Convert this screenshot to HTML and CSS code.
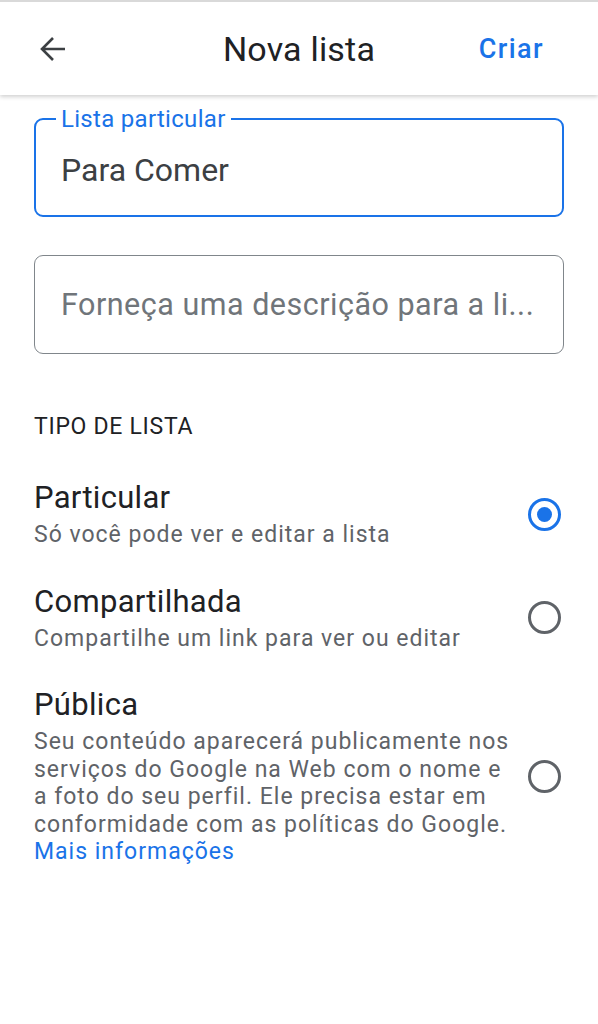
FILE: index.html
```html
<!DOCTYPE html>
<html lang="pt">
<head>
<meta charset="utf-8">
<title>Nova lista</title>
<link rel="stylesheet" href="styles.css">
</head>
<body>
<header class="appbar">
  <div class="appbar-left">
    <svg class="back" viewBox="0 0 28 28" width="28" height="28"><path d="M26 14H3M14 3L3 14l11 11" fill="none" stroke="#3c4043" stroke-width="2.6" stroke-linecap="butt" stroke-linejoin="miter"/></svg>
  </div>
  <h1 class="title">Nova lista</h1>
  <div class="appbar-right"><span class="action">Criar</span></div>
</header>
<main class="content">
  <div class="field field-active">
    <span class="field-label">Lista particular</span>
    <div class="field-value">Para Comer</div>
  </div>
  <div class="field field-idle">
    <div class="field-placeholder">Forneça uma descrição para a li...</div>
  </div>
  <h2 class="section">TIPO DE LISTA</h2>
  <div class="options">
    <div class="option">
      <div class="option-text">
        <div class="option-title">Particular</div>
        <div class="option-desc">Só você pode ver e editar a lista</div>
      </div>
      <span class="radio radio-on"></span>
    </div>
    <div class="option">
      <div class="option-text">
        <div class="option-title">Compartilhada</div>
        <div class="option-desc">Compartilhe um link para ver ou editar</div>
      </div>
      <span class="radio"></span>
    </div>
    <div class="option">
      <div class="option-text">
        <div class="option-title">Pública</div>
        <div class="option-desc">Seu conteúdo aparecerá publicamente nos<br>serviços do Google na Web com o nome e<br>a foto do seu perfil. Ele precisa estar em<br>conformidade com as políticas do Google.<br><span class="link">Mais informações</span></div>
      </div>
      <span class="radio"></span>
    </div>
  </div>
</main>
</body>
</html>
```

FILE: styles.css
```css
* { box-sizing: border-box; }
html, body { margin: 0; padding: 0; background: #fff; }
body {
  font-family: Roboto, "Noto Sans", Arial, sans-serif;
  color: #202124;
  width: 598px;
  height: 1024px;
  overflow: hidden;
}
.appbar {
  height: 95px;
  border-top: 2px solid #d9d9d9;
  display: grid;
  grid-template-columns: 1fr auto 1fr;
  align-items: center;
  box-shadow: 0 2px 4px rgba(0,0,0,0.18);
  position: relative;
  z-index: 1;
}
.appbar-left { padding-left: 39px; display: flex; align-items: center; }
.back { display: block; }
.title {
  margin: 0;
  font-weight: 400;
  font-size: 34px;
  letter-spacing: 0.2px;
  color: #202124;
}
.appbar-right { display: flex; justify-content: flex-end; padding-right: 54px; }
.action { color: #1a73e8; font-size: 27px; font-weight: 500; letter-spacing: 1.4px; }
.content { padding: 23px 34px 0 34px; }
.field {
  position: relative;
  height: 99px;
  border-radius: 9px;
  display: flex;
  align-items: center;
}
.field-active { border: 2px solid #1a73e8; padding-left: 25px; }
.field-idle { border: 1px solid #80868b; margin-top: 38px; padding-left: 26px; }
.field-label {
  position: absolute;
  top: -15px;
  left: 20px;
  padding: 0 5px;
  background: #fff;
  color: #1a73e8;
  font-size: 24px;
  line-height: 28px;
  letter-spacing: 0.3px;
}
.field-value { font-size: 32px; color: #3c4043; padding-top: 5px; }
.field-placeholder { font-size: 30.5px; color: #70757a; letter-spacing: 0.5px; }
.section {
  margin: 59px 0 0 0;
  font-size: 23px;
  font-weight: 400;
  line-height: 28px;
  letter-spacing: 0.7px;
  color: #202124;
}
.options { display: flex; flex-direction: column; gap: 35px; margin-top: 39px; }
.option { display: flex; align-items: center; justify-content: space-between; }
.option-text { width: 486px; }
.option-title { font-size: 31px; line-height: 36px; letter-spacing: 0.3px; color: #202124; }
.option-desc {
  margin-top: 5px;
  font-size: 23px;
  line-height: 27.5px;
  color: #5f6368;
  letter-spacing: 1px;
  white-space: nowrap;
}
.link { color: #1a73e8; }
.radio {
  width: 33px;
  height: 33px;
  border-radius: 50%;
  border: 3px solid #5f6368;
  margin-right: 3px;
  flex: none;
  display: flex;
  align-items: center;
  justify-content: center;
}
.radio-on { border-color: #1a73e8; }
.radio-on::after {
  content: "";
  width: 15px;
  height: 15px;
  border-radius: 50%;
  background: #1a73e8;
}
```
